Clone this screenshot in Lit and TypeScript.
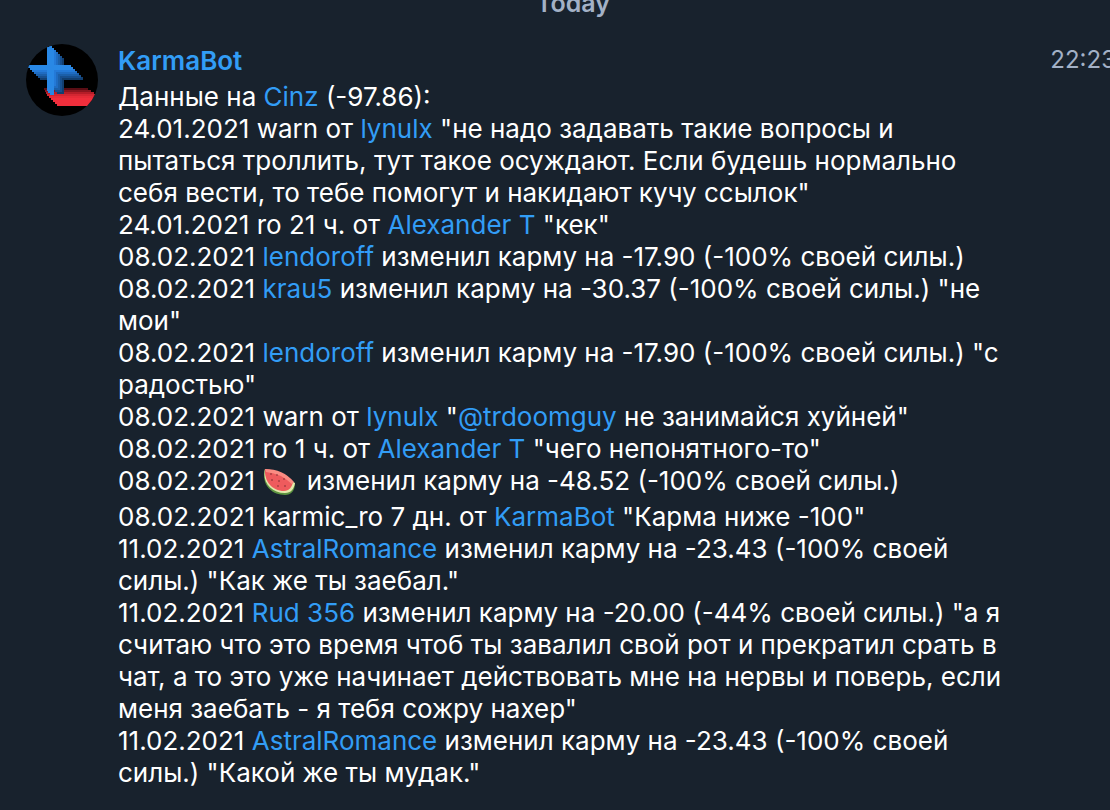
import { LitElement, html, css, svg, nothing } from "lit";
import { customElement, property } from "lit/decorators.js";

type Part = string | { link: string } | { emoji: "watermelon" };

const user = (link: string): Part => ({ link });

const entries: Part[][] = [
  ["Данные на ", user("Cinz"), " (-97.86):"],
  ["24.01.2021 warn от ", user("lynulx"), ' "не надо задавать такие вопросы и пытаться троллить, тут такое осуждают. Если будешь нормально себя вести, то тебе помогут и накидают кучу ссылок"'],
  ["24.01.2021 ro 21 ч. от ", user("Alexander T"), ' "кек"'],
  ["08.02.2021 ", user("lendoroff"), " изменил карму на -17.90 (-100% своей силы.)"],
  ["08.02.2021 ", user("krau5"), ' изменил карму на -30.37 (-100% своей силы.) "не мои"'],
  ["08.02.2021 ", user("lendoroff"), ' изменил карму на -17.90 (-100% своей силы.) "с радостью"'],
  ["08.02.2021 warn от ", user("lynulx"), ' "', user("@trdoomguy"), ' не занимайся хуйней"'],
  ["08.02.2021 ro 1 ч. от ", user("Alexander T"), ' "чего непонятного-то"'],
  ["08.02.2021 ", { emoji: "watermelon" }, " изменил карму на -48.52 (-100% своей силы.)"],
  ["08.02.2021 karmic_ro 7 дн. от ", user("KarmaBot"), ' "Карма ниже -100"'],
  ["11.02.2021 ", user("AstralRomance"), ' изменил карму на -23.43 (-100% своей силы.) "Как же ты заебал."'],
  ["11.02.2021 ", user("Rud 356"), ' изменил карму на -20.00 (-44% своей силы.) "а я считаю что это время чтоб ты завалил свой рот и прекратил срать в чат, а то это уже начинает действовать мне на нервы и поверь, если меня заебать - я тебя сожру нахер"'],
  ["11.02.2021 ", user("AstralRomance"), ' изменил карму на -23.43 (-100% своей силы.) "Какой же ты мудак."'],
];

@customElement("bot-avatar")
class BotAvatar extends LitElement {
  static styles = css`
    :host { display: block; flex: none; width: 72px; height: 72px; }
    svg { display: block; width: 100%; height: 100%; }
  `;

  render() {
    const blues = ["#123f70", "#174f8e", "#1b5fa9", "#1f6cc2", "#247ad8"];
    const reds = [
      { x: 18, y: 44, w: 44, c: "#5a0d14" },
      { x: 19, y: 46, w: 46, c: "#8c151f" },
      { x: 20, y: 48, w: 48, c: "#b51d28" },
      { x: 21, y: 50, w: 49, c: "#d42632" },
      { x: 23, y: 52, w: 48, c: "#e62b38" },
      { x: 25, y: 54, w: 45, c: "#f02e3c" },
      { x: 27, y: 56, w: 42, c: "#f02e3c" },
      { x: 29, y: 58, w: 38, c: "#f02e3c" },
      { x: 31, y: 60, w: 33, c: "#f02e3c" },
    ];
    return html`
      <svg viewBox="0 0 72 72" role="img" aria-label="KarmaBot">
        <defs><clipPath id="disc"><circle cx="36" cy="36" r="36" /></clipPath></defs>
        <g clip-path="url(#disc)">
          <rect width="72" height="72" fill="#000" />
          ${reds.map((r) => svg`<rect x=${r.x} y=${r.y} width=${r.w} height="2" fill=${r.c} />`)}
          ${blues.map((c, i) => {
            const d = 10 - i * 2;
            return svg`<path transform="translate(${d} ${d})" d="M21 3h2V2h3v2h2v17h17v2h2v3H28v14h-7V26H4v-2H2v-3h19z" fill=${c} />`;
          })}
          <path d="M21 3h2V2h3v2h2v17h17v2h2v3H28v25h-4v-2h-2v-2h-1V26H4v-2H2v-3h19z" fill="#2988e5" />
        </g>
      </svg>
    `;
  }
}

@customElement("chat-message")
class ChatMessage extends LitElement {
  @property() author = "";
  @property() time = "";
  @property({ attribute: false }) lines: Part[][] = [];

  static styles = css`
    :host { display: flex; align-items: flex-start; gap: 20px; padding: 0 0 0 26px; }
    a { color: #329df6; text-decoration: none; }
    .main { flex: 1; min-width: 0; }
    .head { display: flex; justify-content: space-between; margin: 0 -6px 3px 0; line-height: 34px; }
    .author { font-weight: 600; }
    .time { font-size: 24px; line-height: 32px; color: #a3b1c6; }
    .body { padding-right: 106px; }
    p { margin: 0; }
    .melon { width: 34px; height: 36px; margin: 0 3px 0 0; vertical-align: top; }
  `;

  private part(p: Part) {
    if (typeof p === "string") return p;
    if ("link" in p) return html`<a href="#">${p.link}</a>`;
    return html`<a href="#"><svg class="melon" viewBox="0 0 34 36" role="img" aria-label="🍉">
      <path d="M2 4C-2 18 7 30 22 30 28 30 32 26 32 18z" fill="#5d9440" />
      <path d="M2 4C-1 17 8 28 22 28 28 28 31 24 32 18z" fill="#e3e8ac" />
      <path d="M2 4C1 16 9 26 21 26 26 26 29 22 30 17Q18 5 2 4z" fill="#ee5b5d" />
      <path d="M2 4Q20 4 31 17L29 19Q17 8 3 7z" fill="#fa8b82" />
      <g fill="#7a2c30">
        <circle cx="8" cy="9" r="0.8" /><circle cx="14" cy="10" r="0.8" /><circle cx="9" cy="15" r="0.8" />
        <circle cx="16" cy="16" r="0.8" /><circle cx="21" cy="14" r="0.8" /><circle cx="15" cy="21" r="0.8" />
        <circle cx="22" cy="21" r="0.8" />
      </g>
    </svg></a>`;
  }

  render() {
    return html`
      <bot-avatar></bot-avatar>
      <div class="main">
        <div class="head">
          <a class="author" href="#">${this.author}</a>
          ${this.time ? html`<time class="time">${this.time}</time>` : nothing}
        </div>
        <div class="body">
          ${this.lines.map((line) => html`<p>${line.map((p) => this.part(p))}</p>`)}
        </div>
      </div>
    `;
  }
}

@customElement("app-root")
class AppRoot extends LitElement {
  static styles = css`
    :host {
      display: block;
      box-sizing: border-box;
      min-height: 100vh;
      overflow: hidden;
      background: #18222d;
      color: #fff;
      font: 26px/32px Inter, "Noto Sans", sans-serif;
    }
    .day { margin-top: -13px; padding-left: 36px; text-align: center; font-size: 25px; font-weight: 600; color: #a3b1c6; }
    chat-message { margin-top: 25px; }
  `;

  render() {
    return html`
      <div class="day">Today</div>
      <chat-message author="KarmaBot" time="22:23" .lines=${entries}></chat-message>
    `;
  }
}
